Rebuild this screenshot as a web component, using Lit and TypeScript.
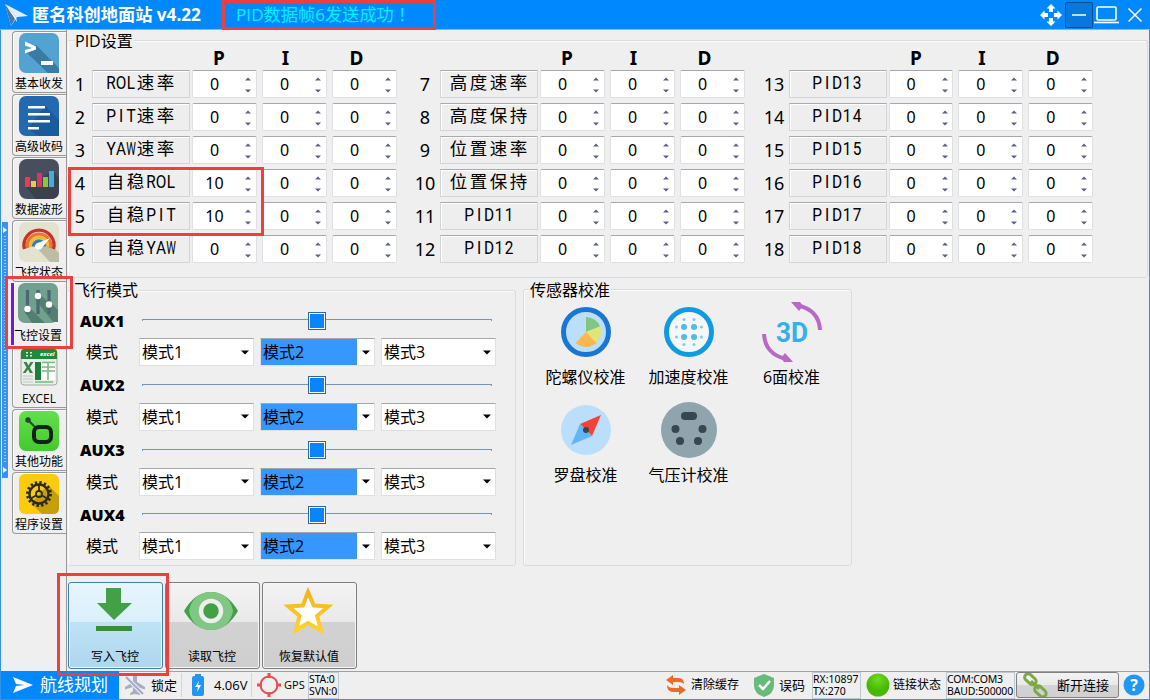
import { LitElement, html, css, svg } from "lit";
import { customElement } from "lit/decorators.js";
import { classMap } from "lit/directives/class-map.js";

const tabIcons = [
  svg`<rect width="40" height="40" rx="7" fill="#52a3d2"/><path d="M17 12L40 35V40H29L6 18z" fill="#3a7ba3"/><path d="M6 8.500l11 5v3L6 20.500v-3.500l7-2L6 12.500z" fill="#fff"/><rect x="22" y="28" width="12" height="4" fill="#fff"/>`,
  svg`<rect width="40" height="40" rx="7" fill="#2269b0"/><path d="M26 10L40 24v16H20L9 33z" fill="#1b5a9b"/><g fill="#fff"><rect x="9" y="10" width="17" height="2.500"/><rect x="9" y="17" width="22" height="2.500"/><rect x="9" y="24" width="22" height="2.500"/><rect x="9" y="31" width="11" height="2.500"/></g>`,
  svg`<rect width="40" height="40" rx="8" fill="#474e5d"/><path d="M34 12l6 7v13q0 8-8 8H17L7 28z" fill="#3a404e"/><rect x="6" y="18" width="5" height="10" fill="#e83c50"/><rect x="12" y="22" width="5" height="6" fill="#ecc94c"/><rect x="18" y="14" width="5" height="14" fill="#dc3368"/><rect x="24" y="18" width="5" height="10" fill="#8cc63e"/><rect x="30" y="12" width="5" height="16" fill="#3fb0dc"/>`,
  svg`<rect width="40" height="40" rx="7" fill="#e2e2cf"/><path d="M28 19L40 31v9h-9L18 26z" fill="#bebca6"/><g fill="none" stroke-width="3.400"><path d="M5.500 27a15 15 0 1 1 29 0" stroke="#c5322d"/><path d="M8.500 26a11.700 11.700 0 1 1 23 0" stroke="#e9752b"/><path d="M11.500 25a8.600 8.600 0 1 1 17 0" stroke="#f0b83d"/><path d="M14.500 24.500a5.500 5.500 0 1 1 11 0" stroke="#357fac"/></g><path d="M31 16L22 27q-4 2-6-2 0-3 3-4z" fill="#fff"/>`,
  svg`<rect width="40" height="40" rx="7" fill="#71a08e"/><path d="M11 24l16 16H14L6 28zM22 11l18 18v10H35L17 16zM32 19l8 8v8L27 24z" fill="#547f70"/><g stroke="#4a6775" stroke-width="3.200"><path d="M9.500 7v24M20 7v24M31 7v24"/></g><g fill="#fff"><circle cx="9.500" cy="26" r="3.200"/><circle cx="20" cy="13" r="3.200"/><circle cx="31" cy="21.500" r="3.200"/></g>`,
  svg`<rect x="2" y="2" width="36" height="35" rx="3" fill="#e9eee9" stroke="#9eaa9e"/><path d="M2 11V4q0-3 3-3h30q3 0 3 3v7z" fill="#22893a"/><path d="M7 4h2v1.500H7zM7 7h2v1.500H7zM11 4h2v1.500h-2zM11 7h2v1.500h-2z" fill="#d9f0db"/><text x="21" y="8" font-size="6" font-style="italic" font-weight="700" fill="#fff">excel</text><path d="M4.500 14h3.200l1.600 3.500L11.500 14h3l-3.700 5.500L14 25h-3.200l-1.800-3.600L6.500 25H3.800l3.700-5.500z" fill="#398546"/><rect x="17" y="14" width="19" height="18" fill="#fff"/><path d="M16 14h6v18h-6z" fill="#1e8038"/><path d="M23 14.500h13M23 19h13M23 23h13M29 14v18M16 34h18" stroke="#75bb7e" stroke-width="1.500"/><path d="M4 28h10M4 31h10M4 34h10" stroke="#bacabb"/>`,
  svg`<rect width="40" height="40" rx="7" fill="url(#lime)"/><defs><linearGradient id="lime" x2="0" y2="1"><stop stop-color="#63df4e"/><stop offset="1" stop-color="#44c92e"/></linearGradient></defs><path d="M9 9l9 9" stroke="#23482a" stroke-width="2"/><circle cx="9" cy="9" r="2.700" fill="#23482a"/><rect x="15" y="16" width="17" height="15" rx="5" fill="none" stroke="#102314" stroke-width="4"/>`,
  svg`<rect width="40" height="40" rx="6" fill="#fccb0d"/><path d="M29 11L40 22v12q0 6-6 6H23L12 29z" fill="#c79e0b"/><circle cx="20" cy="20" r="9.500" fill="none" stroke="#302b21" stroke-width="2.400"/><circle cx="20" cy="20" r="11.500" fill="none" stroke="#302b21" stroke-width="3" stroke-dasharray="2.300 2.220"/><circle cx="20" cy="20" r="3" fill="none" stroke="#302b21" stroke-width="1.800"/><path d="M20 10v7M23 21.500l6 3.500M17 21.500l-6 3.500" stroke="#302b21" stroke-width="1.800"/>`,
];
const tabs = ["基本收发", "高级收码", "数据波形", "飞控状态", "飞控设置", "EXCEL", "其他功能", "程序设置"];

const pidNames = [
  ["ROL速率", "PIT速率", "YAW速率", "自稳ROL", "自稳PIT", "自稳YAW"],
  ["高度速率", "高度保持", "位置速率", "位置保持", "PID11", "PID12"],
  ["PID13", "PID14", "PID15", "PID16", "PID17", "PID18"],
];

const sensors = [
  { name: "陀螺仪校准", icon: svg`<circle cx="32" cy="32" r="22.500" fill="#bbdefb" stroke="#1976d2" stroke-width="5"/><path d="M32 32V17a15 15 0 0 1 14 9.500z" fill="#81c784"/><path d="M32 32l14-5.500a15 15 0 0 1-3.500 16.500z" fill="#dce775"/><path d="M32 32l10.500 11q-10.500 8-21 0z" fill="#ffb74d"/>` },
  { name: "加速度校准", icon: svg`<circle cx="32" cy="32" r="22.500" fill="#f6f7f8" stroke="#0e9be2" stroke-width="5"/><g fill="#4ebbe9"><circle cx="27" cy="27" r="3"/><circle cx="37" cy="27" r="3"/><circle cx="27" cy="37" r="3"/><circle cx="37" cy="37" r="3"/><g opacity=".7"><circle cx="27" cy="19.500" r="1.500"/><circle cx="37" cy="19.500" r="1.500"/><circle cx="27" cy="44.500" r="1.500"/><circle cx="37" cy="44.500" r="1.500"/><circle cx="19.500" cy="27" r="1.500"/><circle cx="19.500" cy="37" r="1.500"/><circle cx="44.500" cy="27" r="1.500"/><circle cx="44.500" cy="37" r="1.500"/></g></g>` },
  { name: "6面校准", icon: svg`<g fill="none" stroke="#ba68c8" stroke-width="4"><path d="M38 5.500Q59 10 60 30"/><path d="M4 34Q5 54 26 59"/></g><path d="M31 2h9l3 4-4 5zM33 62h-9l-3-4 4-5z" fill="#ba68c8"/><text x="16" y="42" font-family="Roboto" font-size="27" font-weight="700" fill="#34b0ee" textLength="32" lengthAdjust="spacingAndGlyphs">3D</text>` },
  { name: "罗盘校准", icon: svg`<circle cx="32" cy="32" r="25" fill="#bbdefb"/><path d="M47 17L38 38 26 26z" fill="#f44336"/><path d="M17 47L26 26 38 38z" fill="#64b5f6"/><circle cx="32" cy="32" r="3" fill="#37474f"/>` },
  { name: "气压计校准", icon: svg`<circle cx="32" cy="32" r="28" fill="#90a4ae"/><g fill="#37474f"><rect x="24" y="14" width="16" height="8" rx="4"/><circle cx="18.500" cy="31" r="4"/><circle cx="45.500" cy="31" r="4"/><circle cx="23" cy="43" r="4"/><circle cx="41" cy="43" r="4"/></g>` },
];

const actions = [
  { name: "写入飞控", icon: svg`<path d="M22 5h15v15h11L30 37 13 20h9z" fill="#43a047"/><path d="M12 43h36v5H12z" fill="#388e3c"/>` },
  { name: "读取飞控", icon: svg`<path d="M3 28q11-19 27-19t27 19Q46 47 30 47T3 28z" fill="#43a047"/><path d="M8 28Q12 9 30 9t22 19Q48 47 30 47T8 28z" fill="#81c784"/><circle cx="30" cy="28" r="10" fill="#43a047" stroke="#eee" stroke-width="4.500"/>` },
  { name: "恢复默认值", icon: svg`<path d="M30 9l5.800 13.500 14.500 1-11.200 9.500 4 14.500L30 40l-12.400 7.500 4-14.500-11.200-9.500 14.500-1z" fill="#fff" stroke="url(#gold)" stroke-width="4"/><defs><linearGradient id="gold" x2="0" y2="1"><stop stop-color="#f3b41f"/><stop offset="1" stop-color="#fdd22f"/></linearGradient></defs>` },
];

@customElement("app-root")
export class AppRoot extends LitElement {
  static styles = css`
    :host { display: block; position: relative; width: 1150px; height: 700px; overflow: hidden; background: #efefef; color: #000; font-family: "Open Sans", "Noto Sans CJK SC", sans-serif; font-size: 16px; line-height: 20px; white-space: nowrap; }
    * { box-sizing: border-box; }
    svg { display: block; flex: none; }
    .title { height: 30px; background: #0089ff; display: flex; color: #fff; align-items: center; padding-left: 4px; border-bottom: 1px solid #7db9ea; }
    .name { margin-left: 4px; width: 190px; font-weight: 700; font-size: 17.200px; }
    .msg { margin-left: 14px; width: 200px; font-size: 17.200px; color: #00f4ff; font-weight: 400; }
    .msg span { font-family: "Noto Sans CJK TC"; }
    .tools { margin-left: auto; display: flex; align-items: center; padding-right: 7px; }
    .min { width: 28px; height: 26px; border: 1px solid #0b4b91; border-radius: 2px; background: #0878df; display: grid; place-items: center; margin-left: 3px; }
    .body { display: flex; height: 641px; border: solid #3490e4; border-width: 0 1px; }
    .side { width: 66px; padding: 1px 0 0 1px; display: flex; border-right: 1px solid #989898; }
    .dock { width: 6px; height: 256px; margin-top: 191px; background: #3a92ee; color: #fff; display: flex; flex-direction: column; justify-content: space-between; align-items: center; padding: 5px 0; }
    .dots { flex: 1; width: 2px; margin: 3px 0; background: repeating-linear-gradient(#9cccf9 0 1px, transparent 1px 3px); }
    .tabs { width: 54px; margin-left: 4px; }
    .tab { height: 62px; margin-bottom: 1px; border: 1px solid #999; border-right: 0; border-radius: 4px 0 0 4px; padding: 1px 0 0 6px; font-size: 12px; line-height: 19px; box-shadow: inset 1px 1px #fafafa; }
    .tab svg { margin-bottom: 1px; }
    .tab span { display: block; width: 50px; margin-left: -5px; text-align: center; }
    .tab.on { margin-left: -1px; width: 55px; border: 0; border-left: 3px solid #7414e8; border-radius: 0; padding-left: 4px; padding-top: 0; }
    .tab.on span { margin: 3px 0 0 -5px; }
    .main { flex: 1; padding: 0 1px; }
    .group { border: 1px solid #d9dcdf; border-radius: 3px; box-shadow: inset 1px 1px #fcfcfc; }
    .legend { display: table; background: #efefef; height: 20px; padding: 0 1px; margin: -11px 0 0 4px; font-weight: 400; }
    .pid { height: 238px; margin-top: 10px; width: 1080px; border-left: 0; }
    .pid .legend { margin: -10px 0 0 6px; }
    .cols { display: grid; grid-template-columns: 329px 332px 332px; column-gap: 16px; }
    .col + .col { --pad: 3px; }
    .col + .col + .col { margin-left: 1px; }
    .heads { display: flex; gap: 5px; height: 19px; margin-left: 124px; font-weight: 700; font-size: 19px; line-height: 14px; font-family: "Noto Sans"; }
    .col + .col .heads { margin-left: 127px; }
    .heads span { width: 65px; padding-right: 11px; text-align: center; }
    .heads span:nth-child(2) { padding-right: 18px; }
    .heads span:nth-child(3) { padding-right: 16px; }
    .row { display: flex; height: 28px; margin-bottom: 5px; }
    .num { width: 24px; margin-right: var(--pad, 0px); text-align: center; font-size: 18px; line-height: 29px; font-family: "Noto Sans"; }
    .field { width: 98px; margin-right: 2px; border: 1px solid #d2d4d7; border-top-color: #aaaaae; background: #eee; box-shadow: inset 1px 1px #fff; display: flex; justify-content: center; line-height: 23px; font-size: 17.500px; padding-right: 1px; }
    .field i { font-style: normal; width: 20px; text-align: center; }
    .field i.l { width: 10px; font-family: Roboto; font-size: 17.500px; line-height: 25px; transform: scaleX(.88); display: flex; justify-content: center; }
    .field i.w { transform: scaleX(.62); }
    .spin { width: 65px; margin-right: 5px; background: #fff; border: 1px solid #dee0e3; border-top-color: #a6a7ad; border-radius: 2px; display: flex; font-size: 16px; line-height: 27px; font-family: "Noto Sans"; }
    .spin:last-child { margin-right: 0; }
    .spin span { width: 43px; text-align: center; }
    .spin svg { margin: 6px 0 0 9px; }
    .mid { display: flex; margin-top: 12px; }
    .flight { width: 448px; height: 276px; border-left: 0; }
    .flight .legend { margin-left: 5px; }
    .aux { height: 64.670px; padding: 5px 20px 0 12px; }
    .flight .aux:nth-child(2) { margin-top: 1.300px; }
    .line { display: flex; height: 28px; align-items: center; font-weight: 700; margin-bottom: 4px; }
    .line b { width: 62px; font-family: "Noto Sans"; padding-top: 1px; }
    .track { flex: 1; display: flex; justify-content: center; align-items: center; border: 1px solid #7895b8; border-bottom: 0; height: 2px; margin-right: 3px; }
    .thumb { width: 18px; height: 18px; background: #0a84fb; border: 1px solid #33669b; box-shadow: inset 0 0 0 1px #fff; }
    .modes { display: flex; height: 28px; align-items: center; }
    .modes > span { width: 53px; margin-left: 6px; flex: none; }
    .combo { flex: none; width: 115px; height: 28px; margin-right: 6px; background: #fff; border: 1px solid #dee0e3; border-top-color: #a6a7ad; display: flex; align-items: center; justify-content: space-between; padding: 0 4px 0 2px; line-height: 26px; font-weight: 400; }
    .combo:last-child { margin-right: 0; }
    .combo.hot { padding-left: 0; }
    .hot span { width: 96px; background: #3597ff; padding-left: 2px; }
    .sensors { width: 329px; height: 277px; margin: -1px 0 0 7px; }
    .sensors .legend { margin: -10px 0 0 5px; }
    .grid { display: grid; grid-template-columns: repeat(3, 103px); grid-auto-rows: 98px; padding-left: 10px; }
    .sensor { display: flex; flex-direction: column; align-items: center; line-height: 24px; }
    .sensor span { margin-top: 1px; }
    .acts { display: flex; gap: 2px; margin: 16px 0 0; }
    .act { width: 95px; height: 87px; border: 1px solid #7d7d7d; border-radius: 3px; background: linear-gradient(#f3f3f3, #e9e9e9 46%, #d2d2d2 46%, #cecece); box-shadow: inset 0 0 0 1px #f6f6f6; display: flex; flex-direction: column; align-items: center; font-size: 12px; padding-right: 1px; }
    .act svg { margin-bottom: 4px; }
    .act.on { border-color: #3c7fb1; background: linear-gradient(#e9f5fc, #d9f0fb 46%, #bee3f6 46%, #aed6ec); }
    .status { height: 29px; background: #efefef; border: solid #3490e4; border-width: 0 1px 1px; box-shadow: inset 0 1px #a0a0a0; display: flex; align-items: center; font-size: 12px; }
    .status > * { flex: none; }
    .left, .right { display: flex; align-items: center; }
    .right { margin-left: auto; padding-right: 4px; }
    .plan { width: 118px; height: 28px; background: #0089ff; color: #fff; display: flex; align-items: center; font-size: 17px; padding-left: 12px; gap: 7px; }
    .sep { width: 1px; height: 24px; background: #d5d5d5; }
    .big { font-size: 13px; }
    .two { flex: none; height: 27px; border: 1px solid #bfc9d4; font-size: 10.500px; line-height: 12.500px; font-family: "Noto Sans"; }
    .two.tight { letter-spacing: -.15px; }
    .disc { width: 103px; height: 26px; border: 1px solid #808080; border-radius: 3px; background: linear-gradient(#f3f3f3, #e9e9e9 48%, #d4d4d4 50%, #d0d0d0); display: flex; align-items: center; padding-left: 5px; gap: 9px; font-size: 13px; }
    .mark { position: absolute; border: 3px solid #eb3f40; pointer-events: none; }
    .m1 { left: 222px; top: 0; width: 214px; height: 30px; }
    .m2 { left: 68px; top: 167px; width: 196px; height: 69px; }
    .m3 { left: 5px; top: 276px; width: 68px; height: 73px; }
    .m4 { left: 57px; top: 573px; width: 112px; height: 103px; }
  `;

  private chars(s: string) {
    return [...s].map((c) => html`<i class=${classMap({ l: c < "~", w: c === "W" })}>${c}</i>`);
  }

  private spin(v: number) {
    return html`<div class="spin"><span>${v}</span><svg width="6" height="16"><path d="M0 3.500L3 .500l3 3zM0 12.500h6l-3 3z" fill="#5b6187"/></svg></div>`;
  }

  private combo(n: number) {
    return html`<div class=${classMap({ combo: true, hot: n === 2 })}><span>模式${n}</span><svg width="8" height="5"><path d="M0 .500h8L4 4.500z"/></svg></div>`;
  }

  render() {
    return html`
      <header class="title">
        <svg width="24" height="24" viewBox="0 0 24 24"><path d="M1 1l23 12-11 1-6 9z" fill="#e3eff8"/><path d="M1 1l11 13-5 9z" fill="#477aa8"/><path d="M1 1l11 13 1 5z" fill="#fff"/></svg>
        <span class="name">匿名科创地面站 v4.22</span>
        <span class="msg">PID数据帧6发送成功<span>！</span></span>
        <div class="tools">
          <svg width="22" height="22" viewBox="0 0 22 22" fill="#fff"><path d="M11 0l4.500 4.500H13V8H9V4.500H6.500zM11 22l4.500-4.500H13V14H9v3.500H6.500zM0 11l4.500-4.500V9H8v4H4.500v2.500zM22 11l-4.500-4.500V9H14v4h3.500v2.500z"/></svg>
          <div class="min"><svg width="14" height="2"><path d="M0 1h14" stroke="#fff" stroke-width="1.500"/></svg></div>
          <svg width="26" height="20" viewBox="0 0 26 20" fill="none" stroke="#fff" stroke-width="1.600"><rect x="4" y="2" width="19" height="13" rx="1"/><path d="M1 17.500h25"/></svg>
          <svg width="16" height="16" viewBox="0 0 16 16" style="margin-left:8px"><path d="M1.500 1.500l13 13M14.500 1.500l-13 13" stroke="#fff" stroke-width="1.500"/></svg>
        </div>
      </header>
      <div class="body">
        <nav class="side">
          <div class="dock"><svg width="4" height="6"><path d="M0 0l4 3-4 3z" fill="#fff"/></svg><div class="dots"></div><svg width="4" height="6"><path d="M0 0l4 3-4 3z" fill="#fff"/></svg></div>
          <div class="tabs">
            ${tabs.map((t, i) => html`<div class=${classMap({ tab: true, on: i === 4 })}><svg width="40" height="40">${tabIcons[i]}</svg><span>${t}</span></div>`)}
          </div>
        </nav>
        <main class="main">
          <section class="group pid">
            <div class="legend">PID设置</div>
            <div class="cols">
              ${pidNames.map((names, g) => html`<div class="col">
                <div class="heads"><span>P</span><span>I</span><span>D</span></div>
                ${names.map((n, r) => html`<div class="row"><span class="num">${g * 6 + r + 1}</span><div class="field">${this.chars(n)}</div>${this.spin(g === 0 && (r === 3 || r === 4) ? 10 : 0)}${this.spin(0)}${this.spin(0)}</div>`)}
              </div>`)}
            </div>
          </section>
          <div class="mid">
            <section class="group flight">
              <div class="legend">飞行模式</div>
              ${[1, 2, 3, 4].map((n) => html`<div class="aux">
                <div class="line"><b>AUX${n}</b><div class="track"><div class="thumb"></div></div></div>
                <div class="modes"><span>模式</span>${[1, 2, 3].map((m) => this.combo(m))}</div>
              </div>`)}
            </section>
            <section class="group sensors">
              <div class="legend">传感器校准</div>
              <div class="grid">${sensors.map((s) => html`<div class="sensor"><svg width="64" height="64">${s.icon}</svg><span>${s.name}</span></div>`)}</div>
            </section>
          </div>
          <div class="acts">
            ${actions.map((a, i) => html`<div class=${classMap({ act: true, on: i === 0 })}><svg width="62" height="60">${a.icon}</svg><span>${a.name}</span></div>`)}
          </div>
        </main>
      </div>
      <footer class="status">
        <div class="left">
          <div class="plan"><svg width="20" height="18" viewBox="0 0 20 18"><path d="M0 1l20 8L0 17l3-7 9-1-9-1z" fill="#fff"/></svg>航线规划</div>
          <svg width="22" height="22" viewBox="0 0 22 22" style="margin:0 5px 0 5px"><path d="M9 2q2-3 4 0v6l8 5v2.500L13 13v4l3 2.500V21l-5-1-5 1v-1.500L9 17v-4l-8 2.500V13l8-5z" fill="#a8aebb"/><path d="M2 3l17 17" stroke="#efefef" stroke-width="4"/><path d="M2 3l17 17" stroke="#a0a9d4" stroke-width="2"/></svg>
          <span class="big">锁定</span><div class="sep" style="margin-left:4px"></div>
          <svg width="12" height="22" viewBox="0 0 12 22" style="margin:0 10px"><path d="M3 0h6v2h1q2 0 2 2v16q0 2-2 2H2q-2 0-2-2V4q0-2 2-2h1z" fill="#2196f3"/><path d="M7 7l-4 6h3l-1 5 4-7H6z" fill="#fff"/></svg>
          <span class="big" style="width:33px">4.06V</span><div class="sep" style="margin-left:4px"></div>
          <svg width="24" height="24" viewBox="0 0 24 24" style="margin:0 3px 0 5px" fill="none" stroke="#e84f51" stroke-width="2"><circle cx="12" cy="12" r="8.500"/><path d="M12 0v5M12 19v5M0 12h5M19 12h5" stroke-width="3"/></svg>
          <span style="font-size:11px;width:24px">GPS</span>
          <div class="two tight" style="width:31px">STA:0<br>SVN:0</div>
        </div>
        <div class="right">
          <svg width="22" height="22" viewBox="0 0 22 22" fill="#ec6a2c"><path d="M1 6l7-5v3h6q5 0 5 6-2-2-5-2H8v3z"/><path d="M21 16l-7 5v-3H8q-6 0-6-7 2 3 6 3h6v-3z"/></svg>
          <span style="margin-left:4px">清除缓存</span>
          <svg width="20" height="23" viewBox="0 0 20 23" style="margin:0 5px 0 15px"><path d="M10 0l10 4v7q0 9-10 12Q0 20 0 11V4z" fill="#66bb7a"/><path d="M5 11l4 4 7-8" fill="none" stroke="#fff" stroke-width="2.500"/></svg>
          <span class="big">误码</span>
          <div class="two" style="width:49px;margin-left:7px">RX:10897<br>TX:270</div>
          <svg width="24" height="24" style="margin:0 3px 0 5px"><defs><radialGradient id="led" cy=".25"><stop stop-color="#71da28"/><stop offset="1" stop-color="#48b900"/></radialGradient></defs><circle cx="12" cy="12" r="11.500" fill="url(#led)"/></svg>
          <span>链接状态</span>
          <div class="two tight" style="width:69px;margin-left:5px">COM:COM3<br>BAUD:500000</div>
          <div class="disc" style="margin-left:1px"><svg width="26" height="24" viewBox="0 0 26 24" fill="none" stroke="#7aaa48" stroke-width="3"><rect x="2" y="2.500" width="13" height="7" rx="3.500" transform="rotate(42 8 6)"/><rect x="12" y="14.500" width="13" height="7" rx="3.500" transform="rotate(42 18 18)"/><path d="M9 8l8 8"/></svg>断开连接</div>
          <svg width="22" height="22" viewBox="0 0 22 22" style="margin-left:4px"><circle cx="11" cy="11" r="10.500" fill="#2196f3"/><text x="11" y="17" text-anchor="middle" font-size="16" font-weight="700" fill="#fff">?</text></svg>
        </div>
      </footer>
      <div class="mark m1"></div><div class="mark m2"></div><div class="mark m3"></div><div class="mark m4"></div>
    `;
  }
}
